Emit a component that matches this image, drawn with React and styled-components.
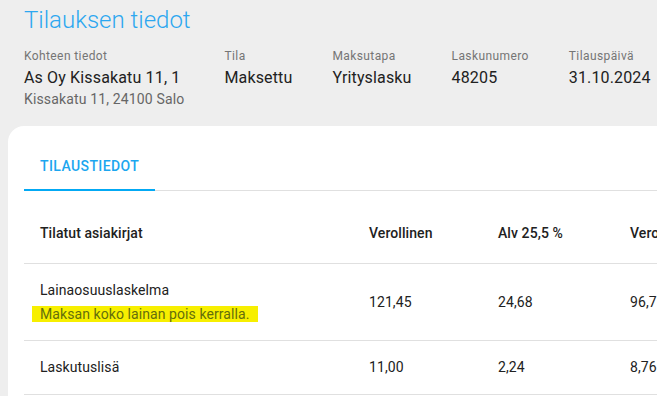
import React from "react";
import styled, { createGlobalStyle } from "styled-components";

const GlobalStyle = createGlobalStyle`
    html, body {
        margin: 0;
        padding: 0;
        background-color: #eeeeee;
        font-family: Roboto, "Liberation Sans", sans-serif;
        color: #212121;
    }
`;

const Page = styled.div`
    width: 657px;
    height: 396px;
    overflow: hidden;
    background-color: #eeeeee;
`;

const Header = styled.header`
    padding: 4px 0 0 24px;
`;

const Title = styled.h1`
    margin: 0;
    font-size: 24px;
    line-height: 32px;
    font-weight: 300;
    color: #2ca7f0;
`;

const InfoRow = styled.div`
    display: flex;
    gap: 40px;
    margin-top: 12px;
`;

const InfoLabel = styled.div`
    font-size: 12px;
    line-height: 16px;
    letter-spacing: 0.4px;
    color: #757575;
    margin-bottom: 2.5px;
`;

const InfoValue = styled.div`
    font-size: 16px;
    line-height: 22px;
    letter-spacing: 0.15px;
    color: #212121;
    white-space: nowrap;
`;

const InfoSub = styled.div`
    font-size: 14px;
    line-height: 20px;
    letter-spacing: 0.15px;
    color: #666666;
    white-space: nowrap;
`;

const Card = styled.section`
    margin: 17px 0 0 8px;
    width: 760px;
    height: 300px;
    padding: 16px 0 0 16px;
    box-sizing: border-box;
    background-color: #fff;
    border-radius: 16px 0 0 0;
`;

const Tabs = styled.div`
    display: flex;
    border-bottom: 1px solid #e0e0e0;
`;

const Tab = styled.div`
    position: relative;
    height: 48px;
    padding: 0 16px;
    display: flex;
    align-items: center;
    font-size: 14px;
    font-weight: 500;
    letter-spacing: 0.4px;
    text-transform: uppercase;
    color: ${p => (p.$active ? "#1ca6ef" : "#757575")};

    &::after {
        content: "";
        display: ${p => (p.$active ? "block" : "none")};
        position: absolute;
        left: 0;
        right: 0;
        bottom: -1px;
        height: 2px;
        background-color: #03a9f4;
    }
`;

const Table = styled.div`
    margin-top: 13px;
`;

const Row = styled.div`
    display: grid;
    grid-template-columns: 329px 129px 132px 150px;
    align-items: center;
    border-bottom: 1px solid #e0e0e0;
    min-height: ${p => (p.$head ? "59px" : "53px")};
`;

const Cell = styled.div`
    padding: 16px;
    font-size: 14px;
    line-height: 20px;
    letter-spacing: 0.08px;
    font-weight: ${p => (p.$head ? 500 : 400)};
    color: #212121;
    white-space: nowrap;
`;

const Note = styled.div`
    margin-top: 4px;
`;

const Highlight = styled.span`
    margin-left: -8px;
    padding: 0 8px;
    background-color: #f7ef00;
    color: #646e0c;
`;

const info = [
    { label: "Kohteen tiedot", value: "As Oy Kissakatu 11, 1", sub: "Kissakatu 11, 24100 Salo" },
    { label: "Tila", value: "Maksettu" },
    { label: "Maksutapa", value: "Yrityslasku" },
    { label: "Laskunumero", value: "48205" },
    { label: "Tilauspäivä", value: "31.10.2024" },
];

const rows = [
    { name: "Lainaosuuslaskelma", note: "Maksan koko lainan pois kerralla.", gross: "121,45", vat: "24,68", net: "96,77" },
    { name: "Laskutuslisä", gross: "11,00", vat: "2,24", net: "8,76" },
];

export default function App() {
    return (
        <Page>
            <GlobalStyle />
            <Header>
                <Title>Tilauksen tiedot</Title>
                <InfoRow>
                    {info.map(item => (
                        <div key={item.label}>
                            <InfoLabel>{item.label}</InfoLabel>
                            <InfoValue>{item.value}</InfoValue>
                            {item.sub && <InfoSub>{item.sub}</InfoSub>}
                        </div>
                    ))}
                </InfoRow>
            </Header>
            <Card>
                <Tabs>
                    <Tab $active>Tilaustiedot</Tab>
                </Tabs>
                <Table>
                    <Row $head>
                        <Cell $head>Tilatut asiakirjat</Cell>
                        <Cell $head>Verollinen</Cell>
                        <Cell $head>Alv 25,5 %</Cell>
                        <Cell $head>Veroton</Cell>
                    </Row>
                    {rows.map(row => (
                        <Row key={row.name}>
                            <Cell>
                                {row.name}
                                {row.note && (
                                    <Note>
                                        <Highlight>{row.note}</Highlight>
                                    </Note>
                                )}
                            </Cell>
                            <Cell>{row.gross}</Cell>
                            <Cell>{row.vat}</Cell>
                            <Cell>{row.net}</Cell>
                        </Row>
                    ))}
                </Table>
            </Card>
        </Page>
    );
}
